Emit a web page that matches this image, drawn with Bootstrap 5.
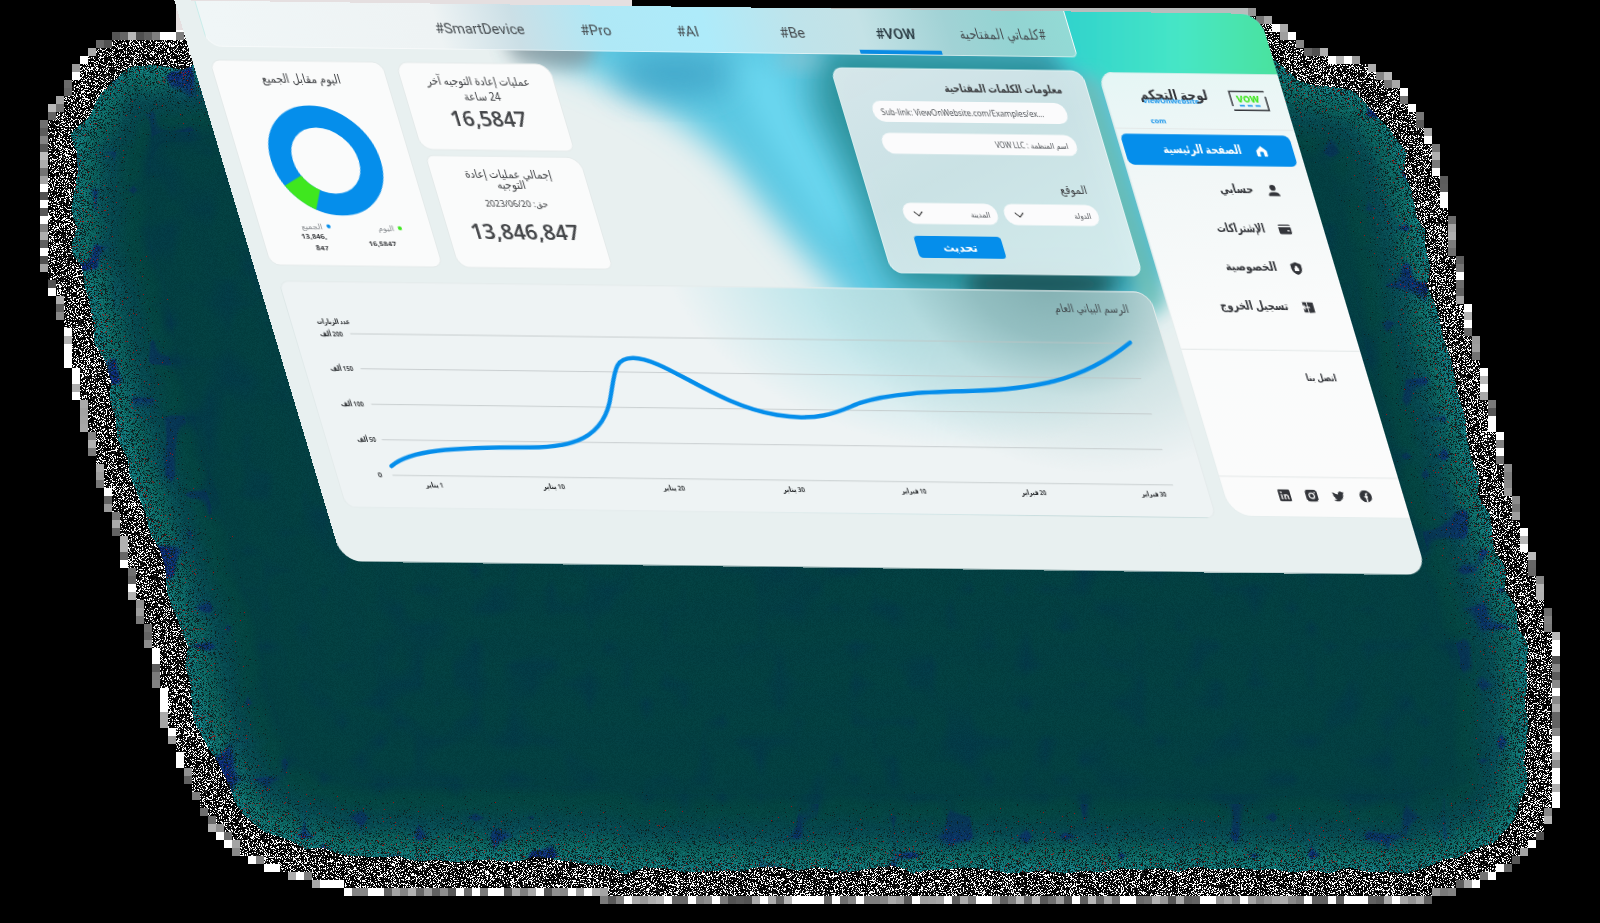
<!DOCTYPE html>
<html lang="ar">
<head>
<meta charset="utf-8">
<meta name="viewport" content="width=device-width, initial-scale=1">
<title>لوحة التحكم</title>
<link href="https://cdn.jsdelivr.net/npm/bootstrap@5.3.0/dist/css/bootstrap.min.css" rel="stylesheet">
<style>
html,body{height:100%;margin:0;background:#000;overflow:hidden}
body{font-family:"Noto Sans","DejaVu Sans",sans-serif;color:#3d3f42;position:relative;line-height:1.2}
#glow{position:absolute;inset:0}
.board{position:absolute;left:0;top:0;width:1085px;height:561px;transform-origin:0 0;transform:matrix(1,.0125,.299,1,174.3,.3);border-radius:0 20px 20px 20px;overflow:hidden;background:#e8f0f0}
.board>svg.wash{position:absolute;left:0;top:0}
.stage{position:relative;padding-left:18px;gap:15px}
.maincol{width:872px}
.tabsbar{height:46px;margin-left:2px;width:870px;background:linear-gradient(90deg,#f0f6f7,#eef3f4 27%,#cbdfe6 36%,#afe8f6 46%,#aeebfa 58%,#bfe3ea 69%,#c4e2e6 76%,#a1d2d5 86%,#92d4d2 94%,#93dad5);border:1px solid rgba(255,255,255,.5);border-top:0;border-radius:0 0 6px 14px;padding:0 2px 0 219px;font-size:14.2px;font-family:Roboto,"Noto Sans",sans-serif}
.tabsbar .tab-i{height:45px;padding-top:14px;line-height:22px;text-align:center;white-space:nowrap;color:#444a4e}
.tab-i.on{font-weight:600;color:#2b3c44!important;border-bottom:4px solid #098be4}
.pane{background:#fafbfb;border:1px solid #e4eaea;border-radius:10px;text-align:center;white-space:nowrap;overflow:hidden}
.nar{display:inline-block;transform:scaleX(.87);white-space:nowrap}
.nar-r{transform-origin:100% 50%}
.t-sm{font-size:12px}
.num{font-weight:600;font-size:20.5px;line-height:26px;color:#45474a}
.formpane{width:252px;height:206px;border-radius:12px;background:linear-gradient(155deg,rgba(223,235,238,.95),rgba(212,230,233,.94) 45%,rgba(222,241,242,.94));border:1px solid rgba(235,248,248,.7);padding:10px 28px 0 31px}
.fld{height:21px;border-radius:10px;background:#fbfbfc;font-size:8px;line-height:21px;color:#505458;padding:0 8px;white-space:nowrap}
.chartpane{width:871px;height:227px;margin-left:2px;border:1px solid rgba(226,234,234,.9);border-radius:10px 16px 10px 10px;background:radial-gradient(ellipse 240px 190px at 765px -8px,#83b0b2,rgba(140,184,186,.85) 30%,rgba(180,212,213,.5) 60%,rgba(238,243,244,0)),radial-gradient(ellipse 250px 170px at 640px -10px,#a5dde4,rgba(176,226,232,.75) 45%,rgba(238,243,244,0)),#eef3f4}
.sidepane{width:181px;height:445px;margin-top:60px;background:linear-gradient(170deg,rgba(234,247,246,.97),#f2f7f7 25%,#fafbfb 55%,#fbfbfb);border-radius:16px 0 0 22px;border:1px solid #e6eeee;border-right:0}
.side-a{height:31px;margin:0 7px 8px 3px;padding:0 25px 0 0;border-radius:6px;font-size:12px;font-weight:600;color:#33353a}
.side-a.on{background:#058eeb;color:#fff}
.side-a svg{margin-left:13px}
.side-a .nar{transform:scaleX(.8)}
.rule{border-top:1px solid #e4e8e8}
.axis text{direction:rtl}
</style>
</head>
<body>
<canvas id="glow" width="1600" height="923"></canvas>

<div class="board">
  <svg class="wash" width="1085" height="561">
    <defs>
      <filter id="b8" x="-50%" y="-50%" width="200%" height="200%"><feGaussianBlur stdDeviation="9"/></filter>
      <filter id="b16" x="-50%" y="-50%" width="200%" height="200%"><feGaussianBlur stdDeviation="16"/></filter>
      <linearGradient id="tg" x1="0" x2="1"><stop offset="0" stop-color="#2ccfce"/><stop offset=".5" stop-color="#46e6c6"/><stop offset="1" stop-color="#4de08c"/></linearGradient>
    </defs>
    <g transform="matrix(1.00375,-.012547,-.30012,1.00375,-174.95,1.886)">
      <path d="M500,-40 L530,50 C610,80 690,115 740,175 C785,235 825,275 870,330 L1120,335 L1330,100 L1300,-40Z" fill="#5bc8e2" filter="url(#b16)"/>
      <path d="M500,30 L515,60 C550,68 575,72 592,60 L600,20Z" fill="#8a969c" opacity=".8" filter="url(#b8)"/>
      <ellipse cx="675" cy="74" rx="60" ry="24" fill="#3a9dc2" opacity=".7" filter="url(#b16)"/>
      <path d="M755,60 C765,100 790,140 850,230" stroke="#6fdcf4" stroke-width="30" fill="none" filter="url(#b16)"/>
      <path d="M822,45 L1060,50 L1075,80 L1150,290 L1000,310 L895,285 L848,170 L815,100Z" fill="#2c909a" filter="url(#b16)"/>
      <ellipse cx="800" cy="60" rx="24" ry="9" fill="#a3c3c9" opacity=".5" filter="url(#b8)"/>
      <ellipse cx="1040" cy="284" rx="75" ry="18" fill="#1d5a5e" filter="url(#b8)"/>
      <path d="M1040,-20 L1300,-20 L1320,90 L1110,90 L1062,62Z" fill="url(#tg)" filter="url(#b8)"/>
      <path d="M1085,80 L1155,310" stroke="#6fc0b5" stroke-width="20" filter="url(#b8)"/>
      <path d="M1120,345 L1260,335 L1300,600 L1200,600Z" fill="#e8f0f0" filter="url(#b8)"/>
    </g>
  </svg>

  <div class="stage d-flex">
    <main class="maincol">
      <nav class="tabsbar d-flex" dir="ltr">
        <div class="tab-i" style="width:116px">#SmartDevice</div>
        <div class="tab-i" style="width:116px">#Pro</div>
        <div class="tab-i" style="width:68px">#AI</div>
        <div class="tab-i ps-2" style="width:133px">#Be</div>
        <div class="tab-i on" style="width:82px">#VOW</div>
        <div class="tab-i" style="width:132px;font-size:14.5px" dir="rtl"><span class="nar" style="transform:scaleX(.76)">#كلماتي المفتاحية</span></div>
      </nav>

      <div class="d-flex" style="margin-top:13px;height:206px">
        <section class="pane" style="width:173px;height:206px;margin-left:-1px">
          <div class="t-sm" style="padding-top:9px;line-height:16px" dir="rtl"><span class="nar">اليوم مقابل الجميع</span></div>
          <svg class="d-block mx-auto" width="112" height="112" viewBox="-56 -56 112 112" style="margin-top:18px">
            <circle r="44" fill="none" stroke="#058eeb" stroke-width="22"/>
            <circle r="44" fill="none" stroke="#3fe71f" stroke-width="22" pathLength="100" stroke-dasharray="10 90" transform="rotate(116.3)"/>
          </svg>
          <div class="d-flex" style="font-size:8px;margin-top:5px">
            <div style="width:78px;padding-left:25px">
              <div class="d-flex align-items-center justify-content-center" style="height:10px;color:#888c90">الجميع<i class="rounded-circle ms-1" style="width:4px;height:4px;background:#058eeb;margin-right:-9px"></i></div>
              <div class="fw-bold" style="font-size:7.4px;line-height:11px">13,846,<br>&nbsp;&nbsp;&nbsp;&nbsp;&nbsp;847</div>
            </div>
            <div style="width:80px;padding-left:0">
              <div class="d-flex align-items-center justify-content-center" style="height:12px;color:#888c90;margin-left:12px">اليوم<i class="rounded-circle ms-1" style="width:4px;height:4px;background:#3fe71f;margin-right:-12px"></i></div>
              <div class="fw-bold" style="font-size:7.4px;line-height:19px">16,5847</div>
            </div>
          </div>
        </section>
        <div style="margin-left:13px">
          <section class="pane" style="width:154px;height:88px;border-radius:12px 14px 8px 12px">
            <div dir="rtl" style="font-size:11.5px;padding-top:9px;line-height:15.5px"><span class="nar">عمليات إعادة التوجيه آخر<br>24 ساعة</span></div>
            <div class="num" style="margin-top:2px">16,5847</div>
          </section>
          <section class="pane" style="width:155px;height:113px;margin:5px 0 0 2px;border-radius:8px 14px 8px 12px">
            <div dir="rtl" style="font-size:11.5px;padding-top:11px;line-height:11px"><span class="nar">إجمالي عمليات إعادة<br>التوجيه</span></div>
            <div dir="rtl" style="font-size:8.6px;line-height:12px;margin-top:8px">حق: 2023/06/20</div>
            <div class="num" style="margin-top:9px;font-size:21px">13,846,847</div>
          </section>
        </div>
        <section class="formpane ms-auto">
          <div dir="rtl" class="fw-bold text-nowrap" style="font-size:11.5px;line-height:16px;margin-right:-3px"><span class="nar nar-r" style="transform:scaleX(.78)">معلومات الكلمات المفتاحية</span></div>
          <div class="fld" style="margin:6px -1px 0 -2px;font-size:8.3px"><span class="nar" style="transform:scaleX(.93);transform-origin:0 50%">Sub-link: ViewOnWebsite.com/Examples/ex...</span></div>
          <div class="fld" dir="rtl" style="margin:11px -1px 0 -2px"><span class="nar nar-r">اسم المنظمة : VOW LLC</span></div>
          <div dir="rtl" style="font-size:11.5px;line-height:16px;margin-top:26px;margin-right:2px"><span class="nar nar-r">الموقع</span></div>
          <div class="d-flex justify-content-between" style="margin:7px -2px 0 -2px">
            <div class="fld d-flex align-items-center justify-content-between" style="width:94px;padding-left:10px"><svg width="10" height="6"><path d="M.8.8 5 5 9.2.8" fill="none" stroke="#333" stroke-width="1.1"/></svg><span class="nar nar-r">المدينة</span></div>
            <div class="fld d-flex align-items-center justify-content-between" style="width:94px;padding-left:10px"><svg width="10" height="6"><path d="M.8.8 5 5 9.2.8" fill="none" stroke="#333" stroke-width="1.1"/></svg><span class="nar nar-r">الدولة</span></div>
          </div>
          <div class="text-white text-center fw-bold" style="width:87px;height:22px;margin:12px 0 0 1px;background:#058eeb;border-radius:4px;font-size:11px;line-height:21px">تحديث</div>
        </section>
      </div>

      <section class="chartpane" style="margin-top:15px">
        <svg class="d-block" width="869" height="225" viewBox="21 281 869 225" font-size="7.2" fill="#222528">
          <text x="865" y="302" font-size="11.5" style="direction:rtl" fill="#444c50" textLength="74" lengthAdjust="spacingAndGlyphs">الرسم البياني العام</text>
          <path d="M76.500,332.500H857M76.500,367.500H857M76.500,403H857M76.500,438.500H857M76.500,474H857" fill="none" stroke="#bfc5c6" stroke-width=".8"/>
          <g class="axis" font-weight="600" text-anchor="middle">
            <text x="63" y="323" textLength="33" lengthAdjust="spacingAndGlyphs">عدد الزيارات</text>
            <text x="57.500" y="335" textLength="23" lengthAdjust="spacingAndGlyphs">200 ألف</text><text x="57.500" y="370" textLength="23" lengthAdjust="spacingAndGlyphs">150 ألف</text><text x="57.500" y="405.500" textLength="23" lengthAdjust="spacingAndGlyphs">100 ألف</text><text x="61" y="441" textLength="19" lengthAdjust="spacingAndGlyphs">50 ألف</text><text x="64" y="476.500">0</text>
            <text x="115.500" y="486" textLength="18" lengthAdjust="spacingAndGlyphs">1 يناير</text><text x="235" y="486" textLength="22" lengthAdjust="spacingAndGlyphs">10 يناير</text><text x="355" y="486" textLength="22" lengthAdjust="spacingAndGlyphs">20 يناير</text><text x="475" y="486" textLength="22" lengthAdjust="spacingAndGlyphs">30 يناير</text><text x="595" y="486" textLength="25" lengthAdjust="spacingAndGlyphs">10 فبراير</text><text x="715" y="486" textLength="25" lengthAdjust="spacingAndGlyphs">20 فبراير</text><text x="835" y="486" textLength="25" lengthAdjust="spacingAndGlyphs">30 فبراير</text>
          </g>
          <g transform="matrix(1.00375,-.012547,-.30012,1.00375,-174.95,1.886)"><path d="M391.7,466C410,450 450,447.5 530,447.5C570,447.5 605,440 611,395C615,370 615,358 633,358C665,358 715,405 777,415C825,423 845,408 860,403C890,393 930,392 973,391C1030,389 1080,383 1130,342.7" fill="none" stroke="#058eeb" stroke-width="4.300" stroke-linecap="round"/></g>
        </svg>
      </section>
    </main>

    <aside class="sidepane">
      <div class="d-flex justify-content-end" style="height:55px;padding:11px 18px 0 0">
        <div dir="rtl" style="width:76px;margin-right:22px;white-space:nowrap">
          <div class="fw-bold" style="font-size:13.5px;line-height:20px;height:15px;color:#33353a"><span class="nar nar-r">لوحة التحكم</span></div>
          <div class="fw-bold" dir="ltr" style="font-size:7.2px;line-height:20px;margin:-9px 0 0 10px;color:#1492ea">ViewOnWebsite.<br>&nbsp;com</div>
        </div>
        <svg width="37" height="22" viewBox="0 0 37 22" style="margin-top:5px"><path d="M1,16V1H36M36,6V20H1" fill="none" stroke="#33353a" stroke-width="1.500"/><text x="18" y="12" font-family="Inter" font-size="9" font-weight="800" text-anchor="middle" textLength="23" fill="#3fe71f">VOW</text><path d="M8,15.500H29" stroke="#058eeb" stroke-width="1.400" stroke-dasharray="5 2.800"/></svg>
      </div>
      <div class="rule" style="margin-bottom:5px"></div>
      <div class="side-a on d-flex align-items-center justify-content-end"><span class="nar nar-r">الصفحة الرئيسية</span><svg width="14" height="14" viewBox="0 0 16 16" fill="#fff"><path d="M8 2 2 7.4V13q0 1 1 1h3V9.5q0-1 1-1h2q1 0 1 1V14h3q1 0 1-1V7.4Z"/></svg></div>
      <div class="side-a d-flex align-items-center justify-content-end"><span class="nar nar-r">حسابي</span><svg width="14" height="14" viewBox="0 0 16 16" fill="#33353a"><circle cx="8" cy="5" r="3.4"/><path d="M1.5 14.5q0-4.5 6.5-4.5t6.5 4.500Z"/></svg></div>
      <div class="side-a d-flex align-items-center justify-content-end"><span class="nar nar-r" style="transform:scaleX(.74)">الإشتراكات</span><svg width="14" height="14" viewBox="0 0 16 16"><path d="M2.500 2.500h11q1 0 1.500 1.500H1q.5-1.500 1.500-1.500ZM1 5.500h14V12q0 1.500-1.500 1.500h-11Q1 13.500 1 12Z" fill="#33353a"/><path d="M10.500 9.500h2.500" stroke="#fff" stroke-width="1.500"/></svg></div>
      <div class="side-a d-flex align-items-center justify-content-end"><span class="nar nar-r" style="transform:scaleX(.85)">الخصوصية</span><svg width="14" height="14" viewBox="0 0 16 16"><path d="M8 1 14 3.500V8q0 5-6 7.500Q2 13 2 8V3.500Z" fill="#33353a"/><path d="M5.500 7.500h5v3.500h-5ZM6.500 7.500V6q1.500-2 3 0v1.500" fill="#fff"/></svg></div>
      <div class="side-a d-flex align-items-center justify-content-end"><span class="nar nar-r">تسجيل الخروج</span><svg width="14" height="14" viewBox="0 0 16 16"><path d="M8 2 14.500 2.500V14L8 14.500ZM2.500 2h4.500v12h-4.500Z" fill="#33353a"/><path d="M1 8h9M4.500 5.500 2 8 4.500 10.500" stroke="#fff" fill="none" stroke-width="1.300"/></svg></div>
      <div class="rule" style="margin-top:28px"></div>
      <div dir="rtl" class="fw-semibold" style="font-size:9.5px;line-height:14px;padding:20px 32px 0 0;height:126px;color:#33353a"><span class="nar nar-r" style="transform:scaleX(.8)">اتصل بنا</span></div>
      <div class="rule"></div>
      <div class="d-flex justify-content-end" style="gap:15px;padding:12px 32px 0 0">
        <svg width="12" height="12" viewBox="0 0 12 12"><rect width="12" height="12" rx="1.500" fill="#33353a"/><path d="M3 5v5M6 10V5M6 7.500q0-2 1.600-2T9.200 7.500V10" stroke="#fff" stroke-width="1.300" fill="none"/><circle cx="3" cy="2.900" r=".9" fill="#fff"/></svg>
        <svg width="12" height="12" viewBox="0 0 12 12"><rect width="12" height="12" rx="3.500" fill="#33353a"/><circle cx="6" cy="6" r="2.600" fill="none" stroke="#fff" stroke-width="1.200"/><circle cx="9.300" cy="2.800" r=".7" fill="#fff"/></svg>
        <svg width="12" height="12" viewBox="0 0 16 16"><path d="M5 15c6 0 9.300-5 9.300-9.300v-.4A6.700 6.700 0 0 0 16 3.500a6.600 6.600 0 0 1-1.900.5 3.300 3.300 0 0 0 1.400-1.800 6.500 6.500 0 0 1-2 .8A3.300 3.300 0 0 0 7.900 6 9.300 9.300 0 0 1 1.100 2.600a3.300 3.300 0 0 0 1 4.400A3.200 3.200 0 0 1 .7 6.600a3.300 3.300 0 0 0 2.600 3.200 3.200 3.200 0 0 1-1.500.1 3.300 3.300 0 0 0 3.100 2.300A6.600 6.600 0 0 1 0 13.500 9.300 9.300 0 0 0 5 15" fill="#33353a"/></svg>
        <svg width="12" height="12" viewBox="0 0 12 12"><circle cx="6" cy="6" r="6" fill="#33353a"/><path d="M6.500 12V4.500q0-1.300 1.700-1.200M4.500 6.600H8" stroke="#fff" stroke-width="1.500" fill="none"/></svg>
      </div>
    </aside>
  </div>
</div>

<script>
// Grainy dark-teal halo that surrounds the board.
(function(){
  var W=1600,H=923,c=document.getElementById('glow').getContext('2d'),im=c.createImageData(W,H),D=im.data,s=7;
  function R(){s=(s*1664525+1013904223)>>>0;return s/4294967296}
  var P=[[176,32],[122,32],[98,44],[78,64],[58,100],[40,122],[40,265],[58,310],[68,366],[84,430],[100,490],[120,550],[136,612],[152,655],[160,714],[182,776],[204,820],[240,858],[290,878],[345,892],[600,896],[605,903],[1420,903],[1468,888],[1516,868],[1545,836],[1559,796],[1559,640],[1536,566],[1514,490],[1498,428],[1484,366],[1468,306],[1458,246],[1446,184],[1432,132],[1402,86],[1370,62],[1310,48],[1272,18],[1250,9],[700,9],[600,0],[176,0]];
  function dist(x,y){
    var m=1e9,ins=false;
    for(var i=0,j=P.length-1;i<P.length;j=i++){
      var a=P[i],b=P[j],dx=b[0]-a[0],dy=b[1]-a[1],t=((x-a[0])*dx+(y-a[1])*dy)/(dx*dx+dy*dy);
      t=t<0?0:t>1?1:t;var ex=x-a[0]-t*dx,ey=y-a[1]-t*dy,q=ex*ex+ey*ey;if(q<m)m=q;
      if((a[1]>y)!=(b[1]>y)&&x<dx*(y-a[1])/dy+a[0])ins=!ins;
    }
    return (ins?1:-1)*Math.sqrt(m);
  }
  var gw=202,gh=118,G=[],N=[],B=[],i,x,y;
  for(y=0;y<gh;y++)for(x=0;x<gw;x++){G.push(dist(x*8,y*8));N.push(R());B.push(dist(x*8+4,y*8+4))}
  function lerp(A,x,y,k){var fx=x/k,fy=y/k,a=fx|0,b=fy|0;fx-=a;fy-=b;i=b*gw+a;return (A[i]*(1-fx)+A[i+1]*fx)*(1-fy)+(A[i+gw]*(1-fx)+A[i+gw+1]*fx)*fy}
  for(y=0;y<H;y++)for(x=0;x<W;x++){
    var k=(y>>3)*gw+(x>>3),o=(y*W+x)*4,r=0,g=0,b=0,e=B[k];
    if(e>0){
      var d=lerp(G,x,y,8),n=lerp(N,x,y,19),u=R(),v=R();
      if(e<7){r=g=b=N[k]>.72?255:80+N[k]*150}
      else if(d<29+n*10){r=g=b=u<.27?255:(u<.5?60*v:0)}
      else{
        var q=Math.min(1,(d-29)/95),z=Math.pow(1-q,3),ring=Math.sin(d/7+n*2)*(d<110?1:.2);
        r=3+z*18;g=63+z*68+ring*3;b=65+z*66-ring*2;
        if(n>.74&&d<100){var m=Math.min(1,(n-.74)*9)*(.3+z*.7);r+=(12-r)*m;g+=(22-g)*m;b+=(115-b)*m}
        else if(n>.55){g-=(n-.55)*14;b+=(n-.55)*14}
        var w=(u-.5)*(z*62+8);r+=w*.3;g+=w;b+=w;
        if(v<.42*z){r=v<.03*z?150:12;g=r>20?20:34;b=g}
      }
    }
    D[o]=r;D[o+1]=g;D[o+2]=b;D[o+3]=255;
  }
  c.putImageData(im,0,0);
  c.fillStyle='#e5dfe0';c.fillRect(176,0,456,30);
  c.fillStyle='#000';c.fillRect(632,0,968,8);
  c.fillStyle='#b9bdbd';c.fillRect(632,8,616,10);
})();
</script>
<script src="https://cdn.jsdelivr.net/npm/bootstrap@5.3.0/dist/js/bootstrap.bundle.min.js"></script>
</body>
</html>
